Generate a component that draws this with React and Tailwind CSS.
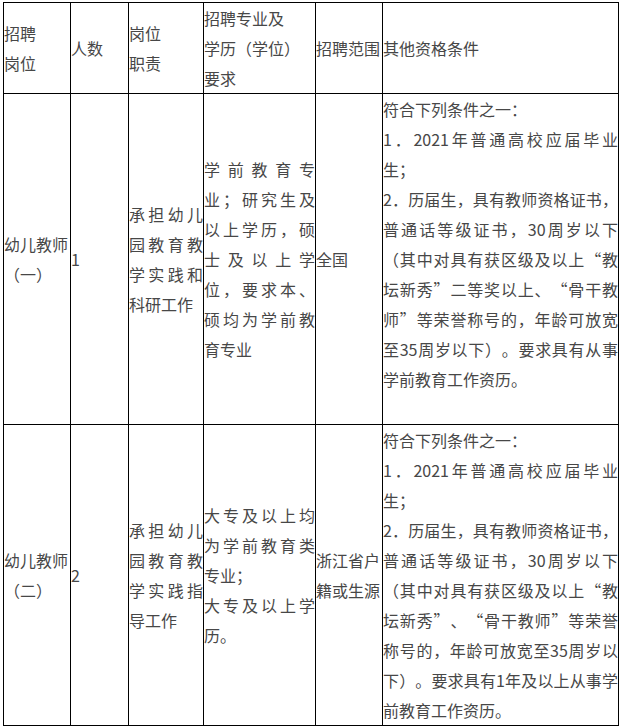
const J = "[text-align-last:justify]";

const rows = [
  {
    cells: [
      [{ t: "招聘" }, { t: "岗位" }],
      [{ t: "人数" }],
      [{ t: "岗位" }, { t: "职责" }],
      [{ t: "招聘专业及" }, { t: "学历（学位）" }, { t: "要求" }],
      [{ t: "招聘范围" }],
      [{ t: "其他资格条件" }],
    ],
  },
  {
    cells: [
      [{ t: "幼儿教师" }, { t: "（一）" }],
      [{ t: "1" }],
      [
        { t: "承担幼儿", j: true },
        { t: "园教育教", j: true },
        { t: "学实践和", j: true },
        { t: "科研工作" },
      ],
      [
        { t: "学前教育专", j: true },
        { t: "业；研究生及", j: true },
        { t: "以上学历，硕", j: true },
        { t: "士及以上学", j: true },
        { t: "位，要求本、", j: true },
        { t: "硕均为学前教", j: true },
        { t: "育专业" },
      ],
      [{ t: "全国" }],
      [
        { t: "符合下列条件之一：" },
        { t: "1．2021年普通高校应届毕业", j: true },
        { t: "生；" },
        { t: "2．历届生，具有教师资格证书，", j: true },
        { t: "普通话等级证书，30周岁以下", j: true },
        { t: "（其中对具有获区级及以上“教", j: true },
        { t: "坛新秀”二等奖以上、“骨干教", j: true },
        { t: "师”等荣誉称号的，年龄可放宽", j: true },
        { t: "至35周岁以下）。要求具有从事", j: true },
        { t: "学前教育工作资历。" },
        { t: "\u00a0" },
      ],
    ],
  },
  {
    cells: [
      [{ t: "幼儿教师" }, { t: "（二）" }],
      [{ t: "2" }],
      [
        { t: "承担幼儿", j: true },
        { t: "园教育教", j: true },
        { t: "学实践指", j: true },
        { t: "导工作" },
      ],
      [
        { t: "大专及以上均", j: true },
        { t: "为学前教育类", j: true },
        { t: "专业；" },
        { t: "大专及以上学", j: true },
        { t: "历。" },
      ],
      [{ t: "浙江省户" }, { t: "籍或生源" }],
      [
        { t: "符合下列条件之一：" },
        { t: "1．2021年普通高校应届毕业", j: true },
        { t: "生；" },
        { t: "2．历届生，具有教师资格证书，", j: true },
        { t: "普通话等级证书，30周岁以下", j: true },
        { t: "（其中对具有获区级及以上“教", j: true },
        { t: "坛新秀”、“骨干教师”等荣誉", j: true },
        { t: "称号的，年龄可放宽至35周岁以", j: true },
        { t: "下）。要求具有1年及以上从事学", j: true },
        { t: "前教育工作资历。" },
      ],
    ],
  },
];

export default function App() {
  return (
    <div className="bg-white w-[620px] h-[727px] pl-[3px] pt-[2px] font-['Noto_Sans_CJK_SC','Noto_Sans_CJK_TC',sans-serif] text-[16px] leading-[30px] text-[#474747] [text-spacing-trim:space-all]">
      <div className="grid grid-cols-[67px_58px_75px_112px_67px_236px] w-[616px] border-l border-t border-black">
        {rows.map((row, ri) =>
          row.cells.map((lines, ci) => (
            <div
              key={ri + "-" + ci}
              className="flex flex-col justify-center border-r border-b border-black overflow-hidden whitespace-nowrap"
            >
              {lines.map((line, li) => (
                <div key={li} className={line.j ? J : "text-left"}>
                  {line.t}
                </div>
              ))}
            </div>
          ))
        )}
      </div>
    </div>
  );
}
